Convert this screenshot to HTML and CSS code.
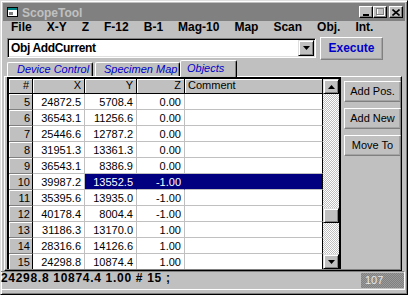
FILE: index.html
```html
<!DOCTYPE html>
<html>
<head>
<meta charset="utf-8">
<link rel="stylesheet" href="styles.css">
</head>
<body>
<div class="window">
  <div class="titlebar">
    <svg class="app-icon" width="16" height="16" viewBox="0 0 16 16"><rect x="3.5" y="3.5" width="10" height="9" fill="#fff" stroke="#000"/><rect x="4" y="4" width="9" height="2" fill="#008080"/><rect x="5" y="8" width="4" height="3" fill="#808080"/></svg>
    <span class="title">ScopeTool</span>
    <div class="caption-buttons">
      <span class="cap-btn"><svg width="8" height="8" viewBox="0 0 8 8"><rect x="1" y="6" width="6" height="2" fill="#000"/></svg></span>
      <span class="cap-btn"><svg width="9" height="8" viewBox="0 0 9 8"><rect x="1.5" y="0.5" width="7" height="7" fill="none" stroke="#fff"/><rect x="0.5" y="-0.5" width="7" height="7" fill="none" stroke="#808080"/><rect x="0" y="0" width="8" height="1" fill="#808080"/></svg></span>
      <span class="cap-btn close"><svg width="8" height="7" viewBox="0 0 8 7"><path d="M0.5 0.5 L7.5 6.5 M7.5 0.5 L0.5 6.5" stroke="#000" stroke-width="1.6"/></svg></span>
    </div>
  </div>
  <nav class="menubar">
    <span>File</span><span>X-Y</span><span>Z</span><span>F-12</span><span>B-1</span><span>Mag-10</span><span>Map</span><span>Scan</span><span>Obj.</span><span>Int.</span>
  </nav>
  <div class="command-row">
    <div class="combo">
      <span class="combo-text">Obj AddCurrent</span>
      <span class="combo-btn"><svg width="7" height="4" viewBox="0 0 7 4"><polygon points="0,0 7,0 3.5,4" fill="#000"/></svg></span>
    </div>
    <span class="btn execute">Execute</span>
  </div>
  <div class="tabs">
    <div class="tab tab-device">Device Control</div>
    <div class="tab tab-map">Specimen Map</div>
    <div class="tab tab-objects">Objects</div>
  </div>
  <div class="panel">
    <div class="grid">
      <div class="table">
        <div class="hd">#</div><div class="hd">X</div><div class="hd">Y</div><div class="hd">Z</div><div class="hd hd-comment">Comment</div>

        <div class="rh">5</div><div class="c">24872.5</div><div class="c">5708.4</div><div class="c">0.00</div><div class="c cm"></div>
        <div class="rh">6</div><div class="c">36543.1</div><div class="c">11256.6</div><div class="c">0.00</div><div class="c cm"></div>
        <div class="rh">7</div><div class="c">25446.6</div><div class="c">12787.2</div><div class="c">0.00</div><div class="c cm"></div>
        <div class="rh">8</div><div class="c">31951.3</div><div class="c">13361.3</div><div class="c">0.00</div><div class="c cm"></div>
        <div class="rh">9</div><div class="c">36543.1</div><div class="c">8386.9</div><div class="c">0.00</div><div class="c cm"></div>
        <div class="rh">10</div><div class="c">39987.2</div><div class="c sel">13552.5</div><div class="c sel">-1.00</div><div class="c cm sel"></div>
        <div class="rh">11</div><div class="c">35395.6</div><div class="c">13935.0</div><div class="c">-1.00</div><div class="c cm"></div>
        <div class="rh">12</div><div class="c">40178.4</div><div class="c">8004.4</div><div class="c">-1.00</div><div class="c cm"></div>
        <div class="rh">13</div><div class="c">31186.3</div><div class="c">13170.0</div><div class="c">1.00</div><div class="c cm"></div>
        <div class="rh">14</div><div class="c">28316.6</div><div class="c">14126.6</div><div class="c">1.00</div><div class="c cm"></div>
        <div class="rh">15</div><div class="c">24298.8</div><div class="c">10874.4</div><div class="c">1.00</div><div class="c cm"></div>
      </div>
      <div class="scrollbar">
        <span class="sb-btn"><svg width="7" height="4" viewBox="0 0 7 4"><polygon points="3.5,0 7,4 0,4" fill="#000"/></svg></span>
        <span class="sb-track sb-track-top"></span>
        <span class="sb-btn"></span>
        <span class="sb-track sb-track-bottom"></span>
        <span class="sb-btn"><svg width="7" height="4" viewBox="0 0 7 4"><polygon points="0,0 7,0 3.5,4" fill="#000"/></svg></span>
      </div>
    </div>
    <div class="side-buttons">
      <span class="btn side-btn">Add Pos.</span>
      <span class="btn side-btn">Add New</span>
      <span class="btn side-btn">Move To</span>
    </div>
  </div>
  <div class="statusbar">
    <span class="status-text">24298.8 10874.4 1.00 # 15 ;</span>
    <span class="status-count">107</span>
  </div>
</div>
</body>
</html>
```
FILE: styles.css
```css
* { box-sizing: border-box; }
html, body { margin: 0; padding: 0; }
body {
  width: 408px;
  height: 295px;
  overflow: hidden;
  background: #c0c0c0;
  font-family: "Liberation Sans", Arial, sans-serif;
  color: #000;
}
.window {
  width: 408px;
  height: 295px;
  background: #c0c0c0;
  border: 1px solid;
  border-color: #dfdfdf #000 #000 #dfdfdf;
  box-shadow: inset 1px 1px #fff, inset -1px -1px #808080;
  padding: 2px;
  display: flex;
  flex-direction: column;
}
/* title bar */
.titlebar {
  height: 18px;
  flex: none;
  background: #808080;
  display: flex;
  align-items: center;
  padding: 0 2px 0 1px;
}
.app-icon { flex: none; margin-right: 2px; }
.title {
  flex: 1;
  font-weight: bold;
  font-size: 12px;
  line-height: 20px;
  height: 18px;
  color: #c0c0c0;
}
.caption-buttons { display: flex; }
.cap-btn {
  width: 14px;
  height: 12px;
  background: #c0c0c0;
  border: 1px solid;
  border-color: #fff #000 #000 #fff;
  box-shadow: inset -1px -1px #808080;
  display: flex;
  align-items: center;
  justify-content: center;
}
.cap-btn.close { margin-left: 2px; }
/* menu */
.menubar {
  height: 16px;
  flex: none;
  display: flex;
  gap: 15px;
  padding-left: 8px;
  font-weight: bold;
  font-size: 12px;
  line-height: 12px;
}
/* command row */
.command-row {
  height: 23px;
  flex: none;
  display: flex;
  align-items: flex-start;
  gap: 4px;
  padding-left: 4px;
}
.combo {
  margin-top: 1px;
  width: 309px;
  height: 20px;
  background: #fff;
  border: 1px solid;
  border-color: #808080 #fff #fff #808080;
  box-shadow: inset 1px 1px #000, inset -1px -1px #dfdfdf;
  padding: 1px;
  display: flex;
  align-items: center;
}
.combo-text {
  flex: 1;
  padding-left: 2px;
  font-weight: bold;
  font-size: 12px;
  letter-spacing: -0.35px;
  line-height: 16px;
}
.combo-btn {
  width: 16px;
  height: 16px;
  background: #c0c0c0;
  border: 1px solid;
  border-color: #dfdfdf #000 #000 #dfdfdf;
  box-shadow: inset 1px 1px #fff, inset -1px -1px #808080;
  display: flex;
  align-items: center;
  justify-content: center;
}
.btn {
  background: #c0c0c0;
  border: 1px solid;
  border-color: #fff #808080 #808080 #fff;
  box-shadow: inset -1px -1px #a4a4a4;
  display: flex;
  align-items: center;
  justify-content: center;
}
.execute {
  width: 63px;
  height: 23px;
  font-weight: bold;
  font-size: 12px;
  line-height: 19px;
  color: #0000c8;
}
/* tabs */
.tabs {
  height: 16px;
  flex: none;
  display: flex;
  align-items: flex-end;
  padding-left: 4px;
}
.tab {
  height: 14px;
  background: #c0c0c0;
  border-top: 1px solid #fff;
  border-left: 1px solid #fff;
  border-right: 1px solid #000;
  box-shadow: inset -1px 0 #808080;
  border-radius: 2px 2px 0 0;
  font-style: italic;
  font-size: 11px;
  line-height: 13px;
  color: #0000c8;
  white-space: nowrap;
}
.tab-device { width: 86px; padding-left: 9px; }
.tab-map { width: 85px; margin-left: 2px; padding-left: 8px; }
.tab-objects {
  width: 57px;
  height: 17px;
  margin-bottom: -1px;
  padding-left: 6px;
  line-height: 15px;
  position: relative;
  z-index: 1;
}
/* panel */
.panel {
  height: 195px;
  flex: none;
  margin: 0 3px 0 1px;
  border: 1px solid;
  border-color: #fff #000 #000 #fff;
  box-shadow: inset -1px -1px #808080;
  padding: 0 0 1px 2px;
  display: flex;
  align-items: flex-start;
}
.grid {
  width: 334px;
  height: 192px;
  border-top: 2px solid #000;
  border-left: 2px solid #000;
  border-right: 2px solid #000;
  display: flex;
}
.table {
  width: 314px;
  height: 190px;
  overflow: hidden;
  display: grid;
  grid-template-columns: 24px 52px 52px 48px 138px;
  grid-template-rows: 15px repeat(11, 16px);
  font-size: 11px;
  background: #fff;
}
.hd {
  background: #c0c0c0;
  border-right: 1px solid #000;
  border-bottom: 1px solid #000;
  box-shadow: inset 1px 1px #fff;
  text-align: right;
  padding-right: 3px;
  line-height: 13px;
}
.hd-comment { text-align: left; padding-left: 3px; }
.rh {
  background: #c0c0c0;
  border-right: 1px solid #000;
  border-bottom: 1px solid #808080;
  box-shadow: inset 1px 1px #fff;
  text-align: right;
  padding-right: 2px;
  line-height: 16px;
}
.c {
  background: #fff;
  border-right: 1px solid #c0c0c0;
  border-bottom: 1px solid #c0c0c0;
  text-align: right;
  padding-right: 3px;
  line-height: 16px;
  overflow: hidden;
}
.c.cm { border-right-color: #000; }
.c.sel { background: #000080; color: #fff; border-right-color: #000080; }
.c.cm.sel { border-right-color: #000; }
/* scrollbar */
.scrollbar {
  width: 16px;
  height: 190px;
  display: flex;
  flex-direction: column;
}
.sb-btn {
  height: 15px;
  flex: none;
  background: #c0c0c0;
  border: 1px solid;
  border-color: #dfdfdf #000 #000 #dfdfdf;
  box-shadow: inset 1px 1px #fff, inset -1px -1px #808080;
  display: flex;
  align-items: center;
  justify-content: center;
}
.sb-track {
  flex: none;
  background-color: #c0c0c0;
  background-image: conic-gradient(#fff 25%, #c0c0c0 0 50%, #fff 0 75%, #c0c0c0 0);
  background-size: 2px 2px;
}
.sb-track-top { height: 114px; }
.sb-track-bottom { height: 31px; }
/* side buttons */
.side-buttons {
  width: 57px;
  margin-left: 3px;
  padding-top: 4px;
  display: flex;
  flex-direction: column;
  gap: 6px;
}
.side-btn {
  height: 21px;
  font-size: 11px;
  line-height: 19px;
}
/* status */
.statusbar {
  height: 19px;
  flex: none;
  margin-left: -2px;
  border-top: 1px solid #808080;
  border-bottom: 1px solid #fff;
  border-right: 1px solid #fff;
  display: flex;
  align-items: flex-start;
}
.status-text {
  flex: 1;
  font-weight: bold;
  font-size: 12px;
  letter-spacing: 0.7px;
  line-height: 12px;
  white-space: nowrap;
}
.status-count {
  width: 43px;
  height: 15px;
  margin-top: 1px;
  padding-left: 4px;
  background-color: #8c8c8c;
  background-image: conic-gradient(#808080 25%, #9a9a9a 0 50%, #808080 0 75%, #9a9a9a 0);
  background-size: 2px 2px;
  color: #e8e8e8;
  font-size: 11px;
  line-height: 14px;
}
```
